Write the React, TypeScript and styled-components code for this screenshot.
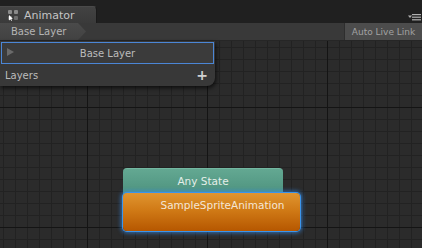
import * as React from "react";
import styled, { createGlobalStyle } from "styled-components";

const GlobalStyle = createGlobalStyle`
  html, body {
    margin: 0;
    padding: 0;
    background: #222;
  }
  body {
    font-family: "DejaVu Sans", "Liberation Sans", sans-serif;
  }
  #root {
    width: 422px;
    height: 248px;
  }
`;

const Window = styled.div`
  width: 422px;
  height: 248px;
  display: flex;
  flex-direction: column;
  overflow: hidden;
  background: #222;
`;

// --- tab strip ---
const TabStrip = styled.div`
  height: 23px;
  display: flex;
  align-items: flex-end;
  justify-content: space-between;
  background: #202020;
`;

const Tab = styled.div`
  width: 97px;
  height: 17px;
  display: flex;
  align-items: center;
  gap: 5px;
  padding-left: 8px;
  box-sizing: border-box;
  background: linear-gradient(#424242, #3a3a3a);
  border-top-right-radius: 4px;
  border-top: 1px solid #4a4a4a;
  border-right: 1px solid #1a1a1a;
  color: #c4c4c4;
  font-size: 11px;
`;

const MenuIcon = styled.div`
  align-self: flex-start;
  margin-top: 14px;
  margin-right: 1px;
  display: flex;
`;

// --- breadcrumb bar ---
const CrumbBar = styled.div`
  height: 17px;
  display: flex;
  align-items: stretch;
  justify-content: space-between;
  background: #393939;
  border-bottom: 1px solid #262626;
`;

const Crumb = styled.div`
  width: 86px;
  display: flex;
  align-items: center;
  padding-left: 11px;
  box-sizing: border-box;
  background: linear-gradient(#4a4a4a, #424242);
  clip-path: polygon(0 0, 78px 0, 86px 50%, 78px 100%, 0 100%);
  color: #b4b4b4;
  font-size: 10px;
`;

const LiveLinkButton = styled.div`
  width: 77px;
  display: flex;
  align-items: center;
  justify-content: center;
  background: #4c4c4c;
  border-left: 1px solid #2e2e2e;
  color: #a2a2a2;
  font-size: 9px;
`;

// --- graph canvas ---
const Canvas = styled.div`
  position: relative;
  flex: 1;
  background-color: #2b2b2b;
  background-image:
    linear-gradient(90deg, #141414 1px, transparent 1px),
    linear-gradient(#141414 1px, transparent 1px),
    linear-gradient(90deg, #222 1px, transparent 1px),
    linear-gradient(#222 1px, transparent 1px);
  background-size: 120px 120px, 120px 120px, 12px 12px, 12px 12px;
  background-position: 87px 0, 0 66px, 3px 0, 0 6px;
`;

const LayersPanel = styled.div`
  position: absolute;
  top: 0;
  left: 0;
  width: 215px;
  display: flex;
  flex-direction: column;
  background: #383838;
  border-bottom-right-radius: 8px;
  box-shadow: 1px 2px 4px rgba(0, 0, 0, 0.7);
  padding-top: 1px;
`;

const LayerRow = styled.div`
  position: relative;
  height: 20px;
  margin: 0 1px;
  display: flex;
  align-items: center;
  justify-content: center;
  background: #3b3b3b;
  border: 1px solid #4b86d6;
  color: #bcbcbc;
  font-size: 10px;
`;

const PlayArrow = styled.div`
  position: absolute;
  left: 5px;
  top: 5px;
  width: 0;
  height: 0;
  border-top: 4px solid transparent;
  border-bottom: 4px solid transparent;
  border-left: 7px solid #6a6a6a;
`;

const PanelFooter = styled.div`
  height: 22px;
  display: flex;
  align-items: center;
  justify-content: space-between;
  padding: 0 7px 0 5px;
  color: #bcbcbc;
  font-size: 10px;
`;

const Plus = styled.span`
  color: #d0d0d0;
  font-size: 14px;
  font-weight: bold;
  line-height: 1;
`;

const StateNode = styled.div<{ $x: number; $y: number; $w: number; $h: number }>`
  position: absolute;
  left: ${(p) => p.$x}px;
  top: ${(p) => p.$y}px;
  width: ${(p) => p.$w}px;
  height: ${(p) => p.$h}px;
  box-sizing: border-box;
  font-size: 10.5px;
  text-align: center;
`;

const AnyState = styled(StateNode)`
  background: linear-gradient(#63a892, #4a8f7b);
  border-radius: 4px;
  border-top: 1px solid #74b8a2;
  color: #e4eee9;
  padding-top: 6px;
`;

const ClipState = styled(StateNode)`
  background: linear-gradient(#e09530, #d07a16 45%, #b65700);
  border-radius: 4px;
  box-shadow: 0 0 0 1px #3b95ec, 0 0 4px 2px rgba(52, 140, 235, 0.7);
  color: #f4e6d6;
  padding: 6px 0 0 22px;
`;

const GridIcon = () => (
  <svg width="11" height="11" viewBox="0 0 11 11">
    <rect x="0" y="0" width="4" height="4" rx="1" fill="#8a8a8a" />
    <rect x="6" y="0" width="4" height="4" rx="1" fill="#8a8a8a" />
    <rect x="0" y="6" width="4" height="4" rx="1" fill="#6e6e6e" />
    <rect x="6" y="6" width="4" height="4" rx="1" fill="#6e6e6e" />
    <path d="M1 5 L1 10.5 L2.4 9.2 L3.4 11 L4 10.6 L3.1 8.9 L4.8 8.8 Z" fill="#fff" />
  </svg>
);

const MenuGlyph = () => (
  <svg width="13" height="7" viewBox="0 0 13 7">
    <path d="M0 1.5 L4 1.5 L2 4 Z" fill="#b0b0b0" />
    <rect x="4" y="0" width="9" height="1.2" fill="#b0b0b0" />
    <rect x="4" y="2.6" width="9" height="1.2" fill="#b0b0b0" />
    <rect x="4" y="5.2" width="9" height="1.2" fill="#b0b0b0" />
  </svg>
);

export default function App() {
  return (
    <Window>
      <GlobalStyle />
      <TabStrip>
        <Tab>
          <GridIcon />
          Animator
        </Tab>
        <MenuIcon>
          <MenuGlyph />
        </MenuIcon>
      </TabStrip>
      <CrumbBar>
        <Crumb>Base Layer</Crumb>
        <LiveLinkButton>Auto Live Link</LiveLinkButton>
      </CrumbBar>
      <Canvas>
        <AnyState $x={123} $y={127} $w={160} $h={30}>
          Any State
        </AnyState>
        <ClipState $x={123} $y={152} $w={177} $h={38}>
          SampleSpriteAnimation
        </ClipState>
        <LayersPanel>
          <LayerRow>
            <PlayArrow />
            Base Layer
          </LayerRow>
          <PanelFooter>
            Layers
            <Plus>+</Plus>
          </PanelFooter>
        </LayersPanel>
      </Canvas>
    </Window>
  );
}
